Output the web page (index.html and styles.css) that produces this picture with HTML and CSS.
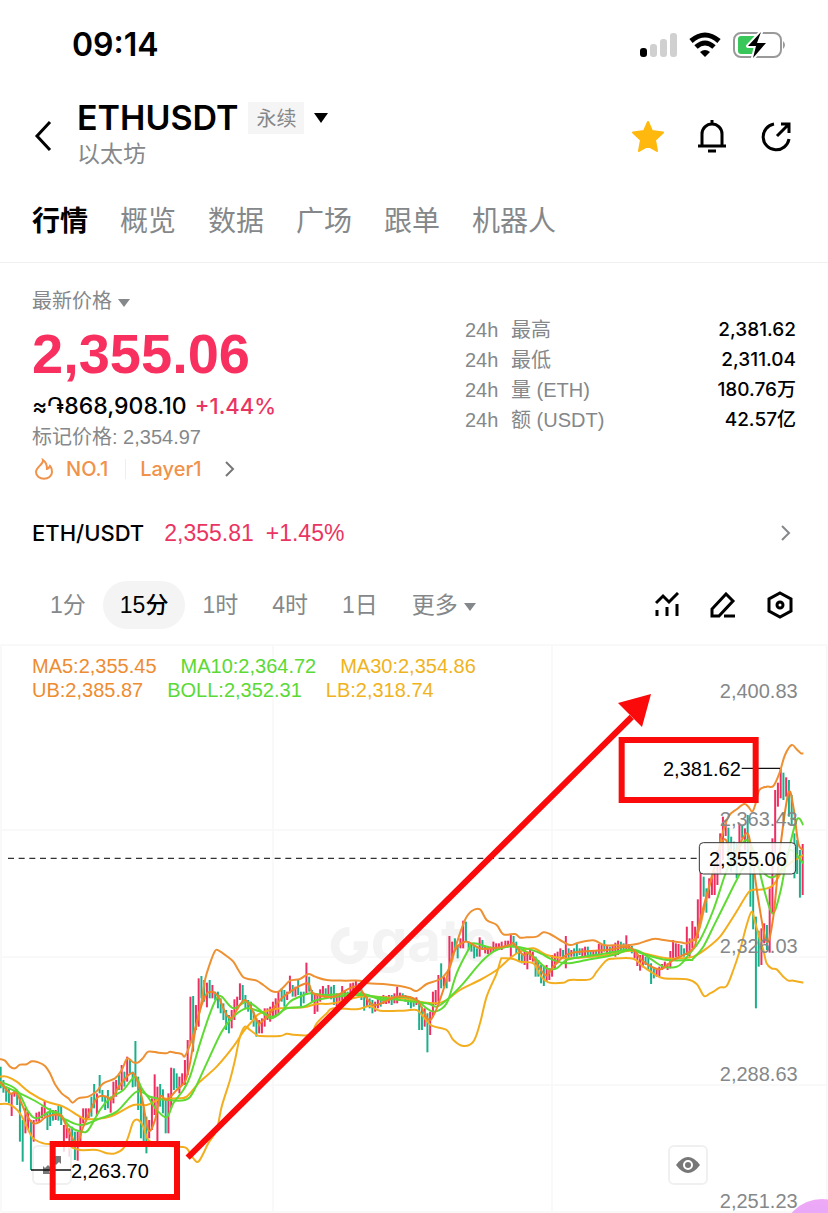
FILE: index.html
```
<!doctype html>
<html lang="zh-CN">
<head>
<meta charset="utf-8">
<meta name="viewport" content="width=device-width">
<title>ETHUSDT</title>
<link rel="stylesheet" href="styles.css">
</head>
<body>
<div class="status">
  <span class="clock">09:14</span>
  <span class="status-icons">
    <svg width="38" height="26" viewBox="0 0 38 26"><rect x="1" y="16" width="7" height="9" rx="3"/><g fill="#d0d0d0"><rect x="11" y="12" width="7" height="13" rx="3"/><rect x="21" y="7" width="7" height="18" rx="3"/><rect x="31" y="1" width="7" height="24" rx="3"/></g></svg>
    <svg width="32" height="26" viewBox="0 0 32 26"><path d="M2 9Q16-3 30 9" fill="none" stroke="#000" stroke-width="5"/><path d="M7 15Q16 7 25 15" fill="none" stroke="#000" stroke-width="5"/><path d="M11 20q5-4 10 0l-5 5z"/></svg>
    <svg width="54" height="28" viewBox="0 0 54 28"><rect x="1" y="2" width="47" height="24" rx="7" fill="#fff" stroke="#999" stroke-width="2"/><path d="M50 10q4 4 0 8z" fill="#999"/><path d="M8 5h14v18H8q-3 0-3-3V8q0-3 3-3z" fill="#39c759"/><path d="M28 1L15 15h8l-3 12 13-15h-9z" stroke="#fff" stroke-width="4" stroke-linejoin="round"/><path d="M28 1L15 15h8l-3 12 13-15h-9z"/></svg>
  </span>
</div>

<header class="head">
  <button class="icon back" aria-label="返回"><svg width="20" height="32" viewBox="0 0 20 32"><path d="M17 2L4 16l13 14" fill="none" stroke="#000" stroke-width="3"/></svg></button>
  <div class="name">
    <h1>ETHUSDT <span class="tag">永续</span><svg width="14" height="10" viewBox="0 0 14 10"><path d="M0 0h14L7 10z"/></svg></h1>
    <div class="sub">以太坊</div>
  </div>
  <div class="actions">
    <button class="icon" aria-label="收藏"><svg width="34" height="34" viewBox="0 0 34 34"><path d="M17 3l4 9 11 1.500-8 7.500 2 11-9-5-9 5 2-11-8-7.500L13 12z" fill="#ffb80d" stroke="#ffb80d" stroke-width="2" stroke-linejoin="round"/></svg></button>
    <button class="icon" aria-label="提醒"><svg width="34" height="34" viewBox="0 0 34 34" fill="none" stroke="#000" stroke-width="3"><path d="M7 27V15a10 10 0 0 1 20 0v12M3 27h28M13 32h8M17 1v4"/></svg></button>
    <button class="icon" aria-label="分享"><svg width="34" height="34" viewBox="0 0 34 34" fill="none" stroke="#000" stroke-width="3"><path d="M15 5a13 13 0 1 0 15 15M18 17L30 5M22 5h8v9"/></svg></button>
  </div>
</header>

<nav class="tabs">
  <a href="#" class="on">行情</a><a href="#">概览</a><a href="#">数据</a><a href="#">广场</a><a href="#">跟单</a><a href="#">机器人</a>
</nav>

<section class="ticker">
  <div>
    <div class="label">最新价格 <svg width="12" height="8" viewBox="0 0 12 8"><path d="M0 0h12L6 8z" fill="#85888a"/></svg></div>
    <div class="price">2,355.06</div>
    <div class="fiat">≈֏868,908.10 <span class="up">+1.44%</span></div>
    <div class="mark">标记价格: 2,354.97</div>
    <a href="#" class="rank">
      <svg width="20" height="22" viewBox="0 0 20 22" fill="none" stroke="#f0924a" stroke-width="2"><path d="M9 2c1 4-7 7-7 12 0 9 16 9 16 0 0-3-1-5-2-6-1 2-2 3-3 3 0-4-1-7-4-9z"/></svg>
      <span>NO.1</span><i></i><span>Layer1</span>
      <svg width="10" height="16" viewBox="0 0 10 16"><path d="M1 1l7 7-7 7" fill="none" stroke="#777" stroke-width="2"/></svg>
    </a>
  </div>
  <table class="stats">
    <tr><th>24h</th><th>最高</th><td>2,381.62</td></tr>
    <tr><th>24h</th><th>最低</th><td>2,311.04</td></tr>
    <tr><th>24h</th><th>量 (ETH)</th><td>180.76万</td></tr>
    <tr><th>24h</th><th>额 (USDT)</th><td>42.57亿</td></tr>
  </table>
</section>

<a href="#" class="spot">
  <b>ETH/USDT</b><span>2,355.81</span><span>+1.45%</span>
  <svg width="10" height="16" viewBox="0 0 10 16"><path d="M1 1l7 7-7 7" fill="none" stroke="#85888a" stroke-width="2"/></svg>
</a>

<div class="periods">
  <button>1分</button><button class="on">15分</button><button>1时</button><button>4时</button><button>1日</button><button class="more">更多 <svg width="12" height="8" viewBox="0 0 12 8"><path d="M0 0h12L6 8z" fill="#85888a"/></svg></button>
  <div class="tools">
    <button class="icon" aria-label="指标"><svg width="24" height="26" viewBox="0 0 24 26" fill="none" stroke="#000" stroke-width="3"><path d="M1 11l7-7 6 6 9-9M2 18v6M12 15v9M22 12v12"/></svg></button>
    <button class="icon" aria-label="画线"><svg width="26" height="26" viewBox="0 0 26 26" fill="none" stroke="#000" stroke-width="3"><path d="M2 24v-7L16 2l7 7L9 24zM14 24h11"/></svg></button>
    <button class="icon" aria-label="设置"><svg width="26" height="28" viewBox="0 0 26 28" fill="none" stroke="#000" stroke-width="3"><path d="M13 2l11 6v12l-11 6-11-6V8z"/><circle cx="13" cy="14" r="3"/></svg></button>
  </div>
</div>

<div class="chart">
  <!-- three drawing units to a pixel -->
  <svg class="plot" viewBox="0 0 2484 1710">
    <g class="grid"><path d="M3 6H2480M3 561H2480M3 942H2480M3 1326H2480M3 1707H2480M3 6V1707M819 6V1707M1656 6V1707M2480 6V1707"/></g>
    <g class="logo"><path d="M1048 865a43 43 0 1 0 43 43h-30" /><text x="1112" y="954">gate</text></g>
    <g id="bars"></g>
    <g id="lines"></g>
    <g class="axis">
      <text x="2393" y="164">2,400.83</text>
      <text x="2393" y="548">2,363.43</text>
      <text x="2393" y="929">2,326.03</text>
      <text x="2393" y="1313">2,288.63</text>
      <text x="2393" y="1694">2,251.23</text>
    </g>
    <path class="now" d="M24 646H2097"/>
    <rect class="nowbox" x="2098" y="599" width="289" height="94" rx="12"/>
    <text class="val" x="2127" y="669">2,355.06</text>
    <path class="lead" d="M2225 376h115"/>
    <text class="val" x="1989" y="399">2,381.62</text>
  </svg>
  <div class="legend">
    <div><span class="c1">MA5:2,355.45</span><span class="c2">MA10:2,364.72</span><span class="c3">MA30:2,354.86</span></div>
    <div><span class="c1">UB:2,385.87</span><span class="c2">BOLL:2,352.31</span><span class="c3">LB:2,318.74</span></div>
  </div>
  <button class="float full" aria-label="全屏"><svg width="20" height="20" viewBox="0 0 20 20" fill="#777"><path d="M11 1h8v8zM1 11v8h8zM3 13l3-3 4 4-3 3zM10 6l3-3 4 4-3 3z"/></svg></button>
  <button class="float eye" aria-label="显示"><svg width="24" height="18" viewBox="0 0 24 18"><path d="M0 9Q12-7 24 9 12 25 0 9z" fill="#777"/><circle cx="12" cy="9" r="4" fill="#777" stroke="#fff" stroke-width="2"/></svg></button>
  <div class="blob"></div>
  <svg class="notes" viewBox="0 0 2484 1710">
    <path class="lead" d="M93 1581h120"/>
    <text class="val" x="213" y="1605">2,263.70</text>
    <g fill="none" stroke="#fa0a0a" stroke-width="18"><path d="M1865 291h402v180h-402zM158 1503h373v159H158z"/><path d="M563 1544L1895 222"/></g>
    <path d="M1953 153L1854 180l72 72z" fill="#fa0a0a"/>
  </svg>
</div>
<script src="chart.js"></script>
</body>
</html>
```
FILE: styles.css
```
*{box-sizing:border-box}
body{margin:0; background:#fff; color:#000; font:20px/30px "Liberation Sans","Noto Sans CJK SC",sans-serif}
button{border:0; background:none; padding:0; color:inherit; font:inherit; cursor:pointer}
a{color:inherit; text-decoration:none}
svg{display:block; flex:none}

.status{display:flex; align-items:center; justify-content:space-between; height:90px; padding:0 41px 0 72px}
.clock{font:600 32px/40px Inter,sans-serif}
.status-icons{display:flex; align-items:center; gap:12px}

.head{display:flex; align-items:center; height:92px; padding:0 35px 0 33px}
.back{margin-right:24px}
.name h1{display:flex; align-items:center; margin:0; font:600 34px/40px Inter,sans-serif}
.tag{margin:0 10px; padding:0 8px; background:#f5f5f5; color:#85888a; font:20px/32px "Noto Sans CJK SC",sans-serif}
.sub{margin-bottom:4px; color:#85888a; font-size:23px; line-height:32px}
.actions{display:flex; gap:30px; margin-left:auto}

.tabs{display:flex; gap:32px; height:81px; padding:0 32px; border-bottom:1px solid #f0f0f0; color:#85888a; font-size:28px; line-height:80px}
.tabs .on{color:#000; font-weight:bold}

.ticker{display:flex; justify-content:space-between; padding:22px 32px 0}
.label,.mark{color:#85888a; line-height:32px}
.label svg{display:inline-block; vertical-align:middle}
.price{color:#f7305f; font-weight:bold; font-size:56px; line-height:74px}
.fiat{font:500 23px/30px Inter,"DejaVu Sans",sans-serif}
.up{margin-left:2px; color:#ea3562; font-size:22px}
.rank{display:flex; align-items:center; height:32px; padding-left:2px; color:#f0924a; font:500 20px/32px Inter,sans-serif}
.rank span{margin-left:12px}
.rank i{width:1px; height:20px; margin:0 2px 0 17px; background:#eee}
.rank svg:last-child{margin-left:24px}
.stats{width:331px; margin-top:30px; border-collapse:collapse; align-self:flex-start}
.stats th{width:46px; padding:0; color:#85888a; font-weight:normal; text-align:left; white-space:nowrap}
.stats td{padding:0; font:500 19px/30px Inter,"Noto Sans CJK SC",sans-serif; text-align:right}

.spot{display:flex; align-items:center; height:72px; margin-top:12px; padding:0 37px 0 32px; color:#ea3562; font-size:23px}
.spot b{margin-right:20px; color:#000; font:500 22px/30px Inter,sans-serif}
.spot span{margin-right:12px}
.spot svg{margin-left:auto}

.periods{display:flex; align-items:center; height:72px; margin-bottom:2px; padding:0 35px 0 33px; color:#85888a; font-size:23px}
.periods>button{height:48px; padding:0 17px; border-radius:24px; white-space:nowrap}
.periods .on{background:#f4f4f4; color:#000; font-weight:500}
.more svg{display:inline-block; vertical-align:middle}
.tools{display:flex; align-items:center; gap:31px; margin-left:auto}

.chart{position:relative; overflow:hidden}
.plot,.notes{width:100%}
.notes{position:absolute; top:0; left:0; pointer-events:none}
.grid{fill:none; stroke:#f8f8f8; stroke-width:5}
.logo{fill:#f3f3f3; font:bold 174px Inter,sans-serif}
.logo path{fill:none; stroke:#f3f3f3; stroke-width:26}
.axis{fill:#85888a; font-size:60px; text-anchor:end}
.val{font-size:60px}
.now{stroke:#333; stroke-width:4; stroke-dasharray:18 14}
.nowbox{fill:#fff; fill-opacity:.85; stroke:#333; stroke-width:3}
.lead{stroke:#111; stroke-width:4}
#bars{stroke-width:6}
#bars .r{stroke:#ee2e60}
#bars .g{stroke:#1cb08a}
#lines{fill:none; stroke-width:6; stroke-linejoin:round}
.legend{position:absolute; top:11px; left:32px; line-height:24px}
.legend span{margin-right:24px}
.c1{color:#ee8c32}
.c2{color:#5bd936}
.c3{color:#efb31e}
.float{position:absolute; display:flex; align-items:center; justify-content:center; width:40px; height:40px; border:2px solid #f0f0f0; border-radius:6px; background:rgba(255,255,255,.8)}
.full{left:32px; bottom:28px}
.eye{right:120px; bottom:28px}
.blob{position:absolute; right:-34px; bottom:-66px; width:80px; height:80px; border-radius:50%; background:linear-gradient(#efa9f6,#c9a0ff)}
```
FILE: chart.js
```
// candles: colour, top, bottom; one every 8.25 units, left to right
var bars = [
[2, 861, "g410-475 g450-488 g470-515 g475-520 r490-558 r480-500 g485-525 g500-635 g570-695 r533-610 r545-600 g570-720 r570-635 r548-575 r545-578 r530-565 r513-560 g545-600 g535-588 g540-572 r540-570 g528-572 g525-585 r585-665 r585-625 r595-680 g590-640 g605-690 r605-692 r560-640 r535-580 r535-575 r535-565 g500-560 g462-535 r490-558 g435-490 g480-515 g500-540 g480-535 r500-548 r455-520 r450-500 g435-480 r405-480 g425-470 r380-455 g390-430 g425-472 g333-470 g440-540 g470-625 g530-640 g560-670 r570-625 r505-600 r433-555 r470-635 g462-530 g478-550 g510-610 r490-610 r413-535 g415-480 g430-475 r440-490 r430-465 r390-465 r330-435 r200-340 g198-365 r225-300 r145-290 g138-205 g150-215 r158-232 g150-205 r165-205 g185-210 g185-235 g205-250 g220-270 g240-300 g255-310 r240-295 r208-270 r200-240 r160-210 g165-215 g195-235 g210-245 g215-270 g245-290 g265-320 r270-310 r265-310 r235-290 r235-270 r230-275 r215-265 r205-260 r185-250"],
[845, 711, "g325-365 g330-380 r335-360 r287-340 g315-350 r320-350 g297-345 g335-380 g335-370 r248-345 g290-335 g330-365 r345-402 r345-395 r328-365 r318-350 g325-355 r315-350 g320-358 g315-375 r340-380 r345-375 r318-370 r330-365 g335-360 r310-360 r308-350 r300-340 g310-335 g325-360 g345-392 r350-380 g355-385 g360-400 r365-395 r355-385 g350-380 r345-372 r348-372 r345-370 g345-375 r340-370 r320-370 r338-362 g340-358 g345-365 g350-375 g358-385 g355-380 r352-375 g370-450 g380-450 r385-440 g400-517 r395-465 r335-410 r330-375 r285-365 g250-325 r290-320 g295-325 r168-305 r185-240 g175-205 g195-235 r175-205 r122-205 g125-185 g185-210 g190-215 g195-235 g205-230 r172-230 g180-210 r200-220 r200-222 r200-220 r185-215 r190-212 r190-210 r185-210"],
[1516, 651, "r242-262 r242-262 r225-290 g228-262 g245-280 g262-305 g280-310 r270-315 r275-328 r270-300 r275-305 g290-350 g300-350 g315-370 g320-378 r315-365 r325-360 r285-350 r280-325 r275-310 r265-290 g270-295 r228-325 g265-295 r270-290 g265-290 g252-290 g265-285 r265-290 r260-290 g260-285 g270-292 r270-292 g270-290 r252-290 r255-280 g240-275 r258-280 g260-285 r255-285 r248-290 r242-285 g245-270 g250-272 r226-272 r252-270 g258-280 r270-295 r280-318 r285-332 r285-322 g290-315 g290-330 g310-372 g325-355 r325-350 r320-350 r312-330 r305-325 r310-330 r273-325 r240-300 r250-292 r252-290 g255-285 g265-290 r200-285 r235-290 r183-265 r200-240 r118-235 r38-180"],
[2111, 471, "g230-290 g265-338 r235-295 r225-285 r215-285 r150-255 r100-220 r50-180 r60-108 g83-180 g110-215 g125-200 g130-235 r70-180 g75-115 r85-150 g45-160 g140-320 g220-388 g350-625 g392-500 r385-495 r370-430 g375-450 r265-458 r115-340 r-30-160 r-52-20 r-95--5 g-82-0 r-68--10 g-60-50 g-15-75 g100-235 g120-222 g150-293 r132-285"]
];

// where each stretch of a line starts
var base = [[0, 861], [780, 711], [1440, 651], [1800, 471]];
var lines = [
["#ee9133", // UB
 "0,387 15,392 30,410 45,415 60,404 80,403 95,394 115,397 135,408 150,430 165,463 185,490 205,505 218,518 235,505 265,500 290,484 310,460 345,445 365,420 382,385 400,397 415,397 430,383 445,365 475,368 500,370 510,365 525,368 545,372 555,378 575,330 600,240 615,150 630,100 645,63 655,61 680,78 700,95 715,120 730,142 750,148 770,152 790,165 815,183 835,185",
 "70,322 90,302 120,297 145,282 165,290 200,300 255,302 300,302 325,310 370,312 420,318 450,325 470,333 500,312 530,302 550,290 570,260 590,190 615,120 635,93 660,88 680,120 710,135 730,163 765,162 780,173",
 "140,232 170,230 190,217 210,222 240,240 270,255 295,248 340,241 370,255 400,256 440,256 470,252 520,237 550,240 600,247 620,250 640,240",
 "285,418 300,380 325,270 350,180 365,110 385,50 410,28 432,12 445,20 457,35 467,10 478,-30 500,-40 520,-42 538,-80 555,-135 575,-165 590,-152 603,-140 610,-140"],
["#f3ae1f", // LB
 "0,522 30,524 60,550 80,590 100,625 130,640 150,642 180,636 210,650 240,660 290,660 320,670 345,670 370,655 385,620 400,575 415,570 430,590 445,630 480,645 540,650 560,655 580,685 597,693 625,640 650,600 665,530 690,450 705,390 720,320 735,290 750,300 770,315",
 "0,468 60,468 80,461 100,464 150,464 170,430 200,400 220,385 290,388 330,378 360,392 430,392 470,390 490,410 515,437 560,450 580,480 610,498 640,485 660,430 680,350 710,280 722,240",
 "68,295 100,297 120,305 160,310 180,345 205,367 250,368 270,360 330,358 350,335 378,302 400,296 460,296 490,320 520,340 550,355 620,358 650,372 672,408 690,400",
 "340,575 360,562 380,558 400,510 420,450 440,375 455,335 465,365 480,420 490,450 500,490 515,505 530,508 550,530 565,542 580,542 610,548"],
["#f5ac1b", // MA30
 "0,440 20,440 50,455 90,488 140,515 190,530 240,560 265,568 330,560 400,525 440,525 480,508 530,505 560,500 600,455 650,410 700,350 730,305 760,270",
 "0,400 60,385 130,382 170,372 220,370 300,350 370,352 430,355 480,365 530,370 560,360 600,330 660,300 710,270 750,235",
 "120,275 160,265 200,285 250,295 300,293 380,285 450,272 500,282 560,295 600,295 640,290 680,265",
 "360,410 400,350 440,285 455,270 490,268 520,255 545,215 570,190 610,165"],
["#5edb33", // MA10
 "0,455 50,480 85,545 110,565 150,545 180,552 210,590 245,605 265,600 300,540 330,505 370,480 405,440 425,475 450,510 470,540 500,562 520,520 550,480 570,440 600,340 630,250 650,205 665,200 700,235 740,215 780,240",
 "30,415 60,400 90,365 120,350 150,340 200,345 300,340 370,360 430,350 470,360 500,385 525,395 560,370 590,280 625,210 640,190 700,205 740,200",
 "90,255 120,265 160,290 200,325 230,325 260,300 310,290 380,280 450,268 480,275 510,295 550,320 590,320 610,305",
 "265,465 300,420 340,330 375,225 400,170 440,120 470,180 490,260 517,340 540,280 560,180 590,60 610,75"],
["#5edb33", // BOLL
 "0,463 60,490 100,510 150,540 200,570 245,585 300,565 350,545 410,485 450,500 500,510 555,510 580,485 620,400 665,305 700,260 740,235",
 "0,395 40,410 80,385 130,380 170,360 230,350 300,345 400,358 500,370 530,380 560,360 610,310 660,250 700,215 740,200",
 "120,262 170,275 220,300 260,310 320,300 400,285 450,270 500,285 560,300 630,300",
 "280,475 310,440 345,370 380,300 410,240 440,190 470,200 510,232 540,215 570,150 610,190"],
["#f08428", // MA5
 "0,455 30,490 50,490 80,555 100,580 120,575 140,560 180,555 200,590 230,640 250,590 290,505 320,500 335,508 360,465 400,430 425,500 445,600 465,570 480,500 500,510 530,480 555,455 570,400 590,280 615,200 635,185 655,200 690,265 735,210 775,280",
 "0,430 30,400 70,350 140,310 160,340 220,350 290,320 340,375 410,350 470,360 510,420 550,330 580,220 615,185 660,205 700,205 750,195",
 "100,250 130,285 150,280 195,345 220,320 270,280 380,270 450,262 490,305 540,328 580,300 640,265",
 "295,380 330,250 370,120 400,160 440,100 455,160 475,300 500,425 520,350 540,150 565,-20 580,20 595,130 610,150"]
];

var htm = "";
bars.forEach(function(s) {
  s[2].split(" ").forEach(function(b, i) {
    var m = /(.)(-?\d+)-(-?\d+)/.exec(b), x = s[0] + i * 8.25;
    htm += "<path class=" + m[1] + " d='M" + x + " " + (s[1] + m[2] * 1) + "V" + (s[1] + m[3] * 1) + "'/>";
  });
});
document.getElementById("bars").innerHTML = htm;

// smooth curve through the points
function curve(p) {
  var d = "M" + p[0];
  for (var i = 0; i < p.length - 1; i++) {
    var a = p[i - 1] || p[i], b = p[i], c = p[i + 1], e = p[i + 2] || c;
    d += "C" + [b[0] + (c[0] - a[0]) / 6, b[1] + (c[1] - a[1]) / 6, c[0] - (e[0] - b[0]) / 6, c[1] - (e[1] - b[1]) / 6, c[0], c[1]];
  }
  return d;
}
htm = "";
lines.forEach(function(l) {
  var p = [];
  base.forEach(function(o, i) {
    l[i + 1].split(" ").forEach(function(s) {
      s = s.split(",");
      p.push([o[0] + s[0] * 1, o[1] + s[1] * 1]);
    });
  });
  htm += "<path stroke='" + l[0] + "' d='" + curve(p) + "'/>";
});
document.getElementById("lines").innerHTML = htm;
```
